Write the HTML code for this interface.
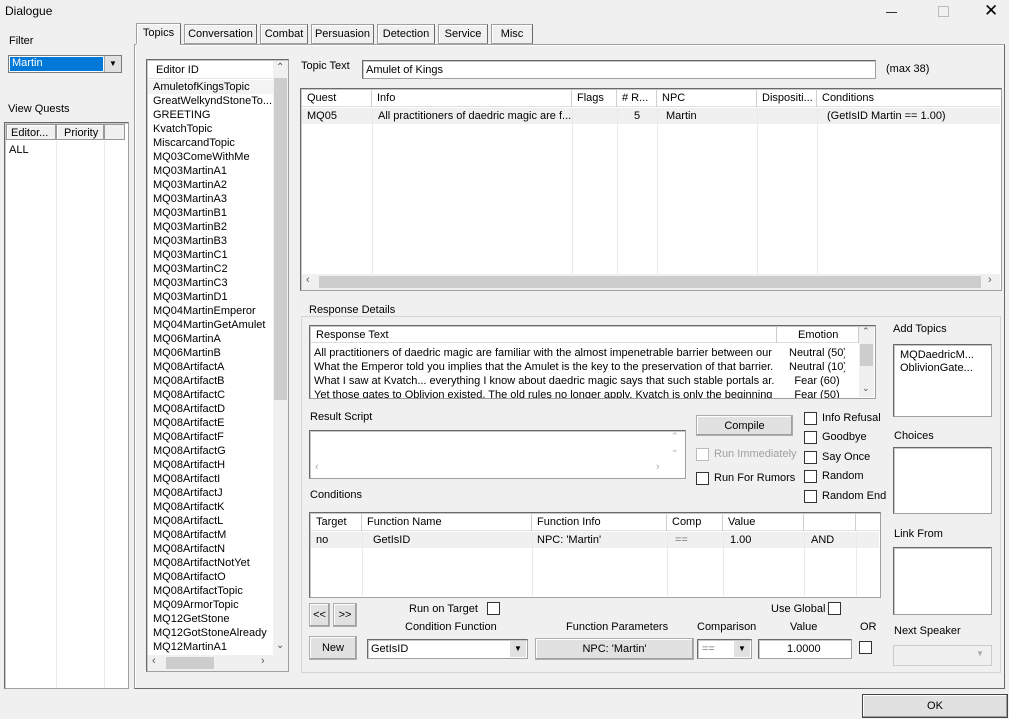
<!DOCTYPE html>
<html><head><meta charset="utf-8">
<style>
*{box-sizing:border-box;margin:0;padding:0}
body{width:1009px;height:719px;background:#f0f0f0;font-family:"Liberation Sans",sans-serif;font-size:11px;color:#000;position:relative;overflow:hidden}
.a{position:absolute;white-space:nowrap}
.w{position:absolute;background:#fff;border:1px solid #a0a0a0;border-top-color:#696969;border-left-color:#696969;box-shadow:inset 1px 1px 0 #c8c8c8}
.btn{position:absolute;background:#e1e1e1;border:1px solid #adadad;text-align:center;box-shadow:inset -1px -1px 0 #a0a0a0,inset 1px 1px 0 #fff}
.hdr{position:absolute;background:#fff;border-bottom:1px solid #e0e0e0;height:17px}
.hc{position:absolute;top:0;height:17px;border-right:1px solid #d0d0d0;padding:2px 0 0 5px}
.vl{position:absolute;width:1px;background:#eaeaea}
.cb{position:absolute;width:13px;height:13px;background:#fff;border:1px solid #333}
.sb{position:absolute;background:#f0f0f0}
.thumb{position:absolute;background:#cdcdcd}
.tab{position:absolute;top:24px;height:20px;background:#f0f0f0;border:1px solid #a0a0a0;border-right-color:#696969;box-shadow:inset 1px 1px 0 #fff;padding:3px 0 0;text-align:center}
.grp{position:absolute;border:1px solid #d5d5d5}
</style></head><body>
<div class="a" style="left:5px;top:4px;font-size:12px">Dialogue</div>
<div class="a" style="left:886px;top:12px;width:11px;height:1px;background:#333"></div>
<div class="a" style="left:938px;top:6px;width:11px;height:11px;border:1px solid #bbb"></div>
<div class="a" style="left:984px;top:1px;font-size:17px">✕</div>

<div class="a" style="left:9px;top:35px">Filter</div>
<div class="a" style="left:8px;top:55px;width:114px;height:18px;background:#fff;border:1px solid #7a7a7a"></div>
<div class="a" style="left:10px;top:57px;width:93px;height:14px;background:#0078d7;color:#fff;padding-left:2px">Martin</div>
<div class="a" style="left:104px;top:56px;width:17px;height:16px;background:#e1e1e1;border-left:1px solid #aaa;text-align:center;font-size:8px;padding-top:3px">▼</div>
<div class="a" style="left:8px;top:103px">View Quests</div>
<div class="w" style="left:4px;top:122px;width:125px;height:567px"></div>
<div class="a" style="left:6px;top:124px;width:50px;height:16px;border:1px solid #999;box-shadow:inset 1px 1px 0 #fff;padding:2px 0 0 4px;background:#f0f0f0">Editor...</div>
<div class="a" style="left:56px;top:124px;width:48px;height:16px;border:1px solid #999;box-shadow:inset 1px 1px 0 #fff;padding:2px 0 0 7px;background:#f0f0f0">Priority</div>
<div class="a" style="left:104px;top:124px;width:21px;height:16px;border:1px solid #999;background:#f0f0f0"></div>
<div class="a" style="left:9px;top:144px">ALL</div>
<div class="vl" style="left:56px;top:141px;height:547px"></div>
<div class="vl" style="left:104px;top:141px;height:547px"></div>

<div class="tab" style="left:136px;top:23px;width:45px;height:22px;border-bottom:none">Topics</div>
<div class="tab" style="left:184px;width:73px">Conversation</div>
<div class="tab" style="left:260px;width:48px">Combat</div>
<div class="tab" style="left:311px;width:63px">Persuasion</div>
<div class="tab" style="left:377px;width:58px">Detection</div>
<div class="tab" style="left:438px;width:50px">Service</div>
<div class="tab" style="left:491px;width:42px">Misc</div>
<div class="a" style="left:134px;top:44px;width:871px;height:645px;border:1px solid #a0a0a0;border-right-color:#696969;border-bottom-color:#696969;box-shadow:inset 1px 1px 0 #fff"></div>
<div class="a" style="left:136px;top:44px;width:44px;height:2px;background:#f0f0f0"></div>

<!-- editor id list -->
<div class="w" style="left:146px;top:59px;width:143px;height:613px"></div>
<div class="a" style="left:148px;top:80px;width:125px;height:14px;background:#f3f3f3"></div>
<div class="a" style="left:148px;top:61px;width:125px;height:18px;border-bottom:1px solid #e5e5e5;padding:3px 0 0 8px;background:#fff">Editor ID</div>
<div class="sb" style="left:273px;top:61px;width:15px;height:594px"></div>
<div class="a" style="left:276px;top:62px;font-size:10px;color:#555">⌃</div>
<div class="thumb" style="left:274px;top:78px;width:13px;height:322px"></div>
<div class="a" style="left:276px;top:640px;font-size:10px;color:#555">⌄</div>
<div class="sb" style="left:148px;top:655px;width:140px;height:16px"></div>
<div class="thumb" style="left:166px;top:657px;width:48px;height:12px"></div>
<div class="a" style="left:152px;top:655px;font-size:11px;color:#555">‹</div>
<div class="a" style="left:261px;top:655px;font-size:11px;color:#555">›</div>
<div class="a" style="left:153px;top:80px;line-height:14px;font-size:11px;width:120px;overflow:hidden">
AmuletofKingsTopic<br>GreatWelkyndStoneTo...<br>GREETING<br>KvatchTopic<br>MiscarcandTopic<br>MQ03ComeWithMe<br>MQ03MartinA1<br>MQ03MartinA2<br>MQ03MartinA3<br>MQ03MartinB1<br>MQ03MartinB2<br>MQ03MartinB3<br>MQ03MartinC1<br>MQ03MartinC2<br>MQ03MartinC3<br>MQ03MartinD1<br>MQ04MartinEmperor<br>MQ04MartinGetAmulet<br>MQ06MartinA<br>MQ06MartinB<br>MQ08ArtifactA<br>MQ08ArtifactB<br>MQ08ArtifactC<br>MQ08ArtifactD<br>MQ08ArtifactE<br>MQ08ArtifactF<br>MQ08ArtifactG<br>MQ08ArtifactH<br>MQ08ArtifactI<br>MQ08ArtifactJ<br>MQ08ArtifactK<br>MQ08ArtifactL<br>MQ08ArtifactM<br>MQ08ArtifactN<br>MQ08ArtifactNotYet<br>MQ08ArtifactO<br>MQ08ArtifactTopic<br>MQ09ArmorTopic<br>MQ12GetStone<br>MQ12GotStoneAlready<br>MQ12MartinA1</div>

<div class="a" style="left:301px;top:60px">Topic Text</div>
<div class="w" style="left:362px;top:60px;width:514px;height:19px;padding:3px 0 0 3px">Amulet of Kings</div>
<div class="a" style="left:886px;top:63px">(max 38)</div>

<!-- quest table -->
<div class="w" style="left:300px;top:88px;width:702px;height:203px"></div>
<div class="hdr" style="left:302px;top:90px;width:698px">
<div class="hc" style="left:0;width:70px">Quest</div>
<div class="hc" style="left:70px;width:200px">Info</div>
<div class="hc" style="left:270px;width:45px">Flags</div>
<div class="hc" style="left:315px;width:40px"># R...</div>
<div class="hc" style="left:355px;width:100px">NPC</div>
<div class="hc" style="left:455px;width:60px">Dispositi...</div>
<div class="hc" style="left:515px;width:183px;border:none">Conditions</div>
</div>
<div class="a" style="left:302px;top:108px;width:698px;height:16px;background:#f0f0f0"></div>
<div class="a" style="left:307px;top:110px">MQ05</div>
<div class="a" style="left:378px;top:110px">All practitioners of daedric magic are f...</div>
<div class="a" style="left:634px;top:110px">5</div>
<div class="a" style="left:666px;top:110px">Martin</div>
<div class="a" style="left:827px;top:110px">(GetIsID Martin == 1.00)</div>
<div class="vl" style="left:372px;top:108px;height:166px"></div>
<div class="vl" style="left:572px;top:108px;height:166px"></div>
<div class="vl" style="left:617px;top:108px;height:166px"></div>
<div class="vl" style="left:657px;top:108px;height:166px"></div>
<div class="vl" style="left:757px;top:108px;height:166px"></div>
<div class="vl" style="left:817px;top:108px;height:166px"></div>
<div class="sb" style="left:302px;top:274px;width:698px;height:16px"></div>
<div class="thumb" style="left:319px;top:276px;width:662px;height:12px"></div>
<div class="a" style="left:306px;top:274px;color:#555">‹</div>
<div class="a" style="left:988px;top:274px;color:#555">›</div>

<!-- response details -->
<div class="grp" style="left:301px;top:316px;width:700px;height:357px"></div>
<div class="a" style="left:307px;top:304px;background:#f0f0f0;padding:0 2px">Response Details</div>
<div class="w" style="left:309px;top:325px;width:567px;height:74px"></div>
<div class="a" style="left:311px;top:327px;width:548px;height:16px;background:#fff;border-bottom:1px solid #ddd"></div>
<div class="a" style="left:316px;top:329px">Response Text</div>
<div class="vl" style="left:776px;top:327px;height:16px;background:#ccc"></div>
<div class="vl" style="left:858px;top:327px;height:16px;background:#ccc"></div>
<div class="a" style="left:798px;top:329px">Emotion</div>
<div class="sb" style="left:859px;top:327px;width:15px;height:70px"></div>
<div class="thumb" style="left:860px;top:344px;width:13px;height:22px"></div>
<div class="a" style="left:862px;top:326px;font-size:9px;color:#555">⌃</div>
<div class="a" style="left:862px;top:383px;font-size:9px;color:#555">⌄</div>
<div class="a" style="left:314px;top:346px;line-height:14px;width:460px;overflow:hidden;height:52px">All practitioners of daedric magic are familiar with the almost impenetrable barrier between our w...<br>What the Emperor told you implies that the Amulet is the key to the preservation of that barrier.<br>What I saw at Kvatch... everything I know about daedric magic says that such stable portals ar...<br>Yet those gates to Oblivion existed. The old rules no longer apply. Kvatch is only the beginning ...</div>
<div class="a" style="left:789px;top:346px;line-height:14px;text-align:center;width:56px;height:52px;overflow:hidden">Neutral (50)<br>Neutral (10)<br>Fear (60)<br>Fear (50)</div>

<div class="a" style="left:893px;top:323px">Add Topics</div>
<div class="w" style="left:893px;top:344px;width:99px;height:73px;padding:4px 0 0 6px;line-height:13px">MQDaedricM...<br>OblivionGate...</div>

<div class="a" style="left:310px;top:411px">Result Script</div>
<div class="w" style="left:309px;top:430px;width:377px;height:49px"></div>
<div class="a" style="left:671px;top:431px;font-size:9px;color:#aaa">⌃</div>
<div class="a" style="left:671px;top:444px;font-size:9px;color:#aaa">⌄</div>
<div class="a" style="left:315px;top:461px;color:#aaa">‹</div>
<div class="a" style="left:656px;top:461px;color:#aaa">›</div>
<div class="btn" style="left:696px;top:415px;width:97px;height:21px;padding-top:4px">Compile</div>
<div class="cb" style="left:696px;top:448px;border-color:#bbb"></div>
<div class="a" style="left:714px;top:448px;color:#a0a0a0">Run Immediately</div>
<div class="cb" style="left:696px;top:472px"></div>
<div class="a" style="left:714px;top:472px">Run For Rumors</div>
<div class="cb" style="left:804px;top:412px"></div><div class="a" style="left:822px;top:412px">Info Refusal</div>
<div class="cb" style="left:804px;top:431px"></div><div class="a" style="left:822px;top:431px">Goodbye</div>
<div class="cb" style="left:804px;top:451px"></div><div class="a" style="left:822px;top:451px">Say Once</div>
<div class="cb" style="left:804px;top:470px"></div><div class="a" style="left:822px;top:470px">Random</div>
<div class="cb" style="left:804px;top:490px"></div><div class="a" style="left:822px;top:490px">Random End</div>
<div class="a" style="left:894px;top:430px">Choices</div>
<div class="w" style="left:893px;top:447px;width:99px;height:67px"></div>
<div class="a" style="left:310px;top:489px">Conditions</div>

<!-- conditions table -->
<div class="w" style="left:309px;top:512px;width:572px;height:86px"></div>
<div class="hdr" style="left:311px;top:514px;width:568px">
<div class="hc" style="left:0;width:51px">Target</div>
<div class="hc" style="left:51px;width:170px">Function Name</div>
<div class="hc" style="left:221px;width:135px">Function Info</div>
<div class="hc" style="left:356px;width:56px">Comp</div>
<div class="hc" style="left:412px;width:81px">Value</div>
<div class="hc" style="left:493px;width:52px"></div>
</div>
<div class="a" style="left:311px;top:532px;width:568px;height:16px;background:#f0f0f0"></div>
<div class="a" style="left:316px;top:534px">no</div>
<div class="a" style="left:373px;top:534px">GetIsID</div>
<div class="a" style="left:537px;top:534px">NPC: 'Martin'</div>
<div class="a" style="left:675px;top:534px;color:#777">==</div>
<div class="a" style="left:730px;top:534px">1.00</div>
<div class="a" style="left:811px;top:534px">AND</div>
<div class="vl" style="left:362px;top:532px;height:64px"></div>
<div class="vl" style="left:532px;top:532px;height:64px"></div>
<div class="vl" style="left:667px;top:532px;height:64px"></div>
<div class="vl" style="left:723px;top:532px;height:64px"></div>
<div class="vl" style="left:804px;top:532px;height:64px"></div>
<div class="vl" style="left:856px;top:532px;height:64px"></div>
<div class="a" style="left:894px;top:528px">Link From</div>
<div class="w" style="left:893px;top:547px;width:99px;height:68px"></div>

<div class="btn" style="left:309px;top:603px;width:21px;height:24px;padding-top:5px">&lt;&lt;</div>
<div class="btn" style="left:333px;top:603px;width:24px;height:24px;padding-top:5px">&gt;&gt;</div>
<div class="a" style="left:409px;top:603px">Run on Target</div>
<div class="cb" style="left:487px;top:602px"></div>
<div class="a" style="left:771px;top:603px">Use Global</div>
<div class="cb" style="left:828px;top:602px"></div>
<div class="a" style="left:405px;top:621px">Condition Function</div>
<div class="a" style="left:566px;top:621px">Function Parameters</div>
<div class="a" style="left:697px;top:621px">Comparison</div>
<div class="a" style="left:790px;top:621px">Value</div>
<div class="a" style="left:860px;top:621px">OR</div>
<div class="a" style="left:894px;top:625px">Next Speaker</div>
<div class="btn" style="left:309px;top:636px;width:48px;height:24px;padding-top:5px">New</div>
<div class="w" style="left:367px;top:639px;width:161px;height:20px;padding:3px 0 0 3px">GetIsID</div>
<div class="a" style="left:510px;top:641px;width:16px;height:16px;background:#e1e1e1;text-align:center;font-size:8px;padding-top:3px">▼</div>
<div class="btn" style="left:535px;top:638px;width:159px;height:22px;padding-top:4px">NPC: 'Martin'</div>
<div class="w" style="left:697px;top:639px;width:55px;height:20px;padding:3px 0 0 4px;color:#777">==</div>
<div class="a" style="left:734px;top:641px;width:16px;height:16px;background:#e1e1e1;text-align:center;font-size:8px;padding-top:3px">▼</div>
<div class="w" style="left:758px;top:639px;width:94px;height:20px;padding:3px 0 0 28px">1.0000</div>
<div class="cb" style="left:859px;top:641px"></div>
<div class="a" style="left:893px;top:645px;width:99px;height:21px;border:1px solid #ccc;background:#f0f0f0"></div>
<div class="a" style="left:976px;top:649px;font-size:8px;color:#aaa">▼</div>

<div class="btn" style="left:862px;top:694px;width:146px;height:24px;padding-top:5px;border-color:#444">OK</div>
</body></html>
